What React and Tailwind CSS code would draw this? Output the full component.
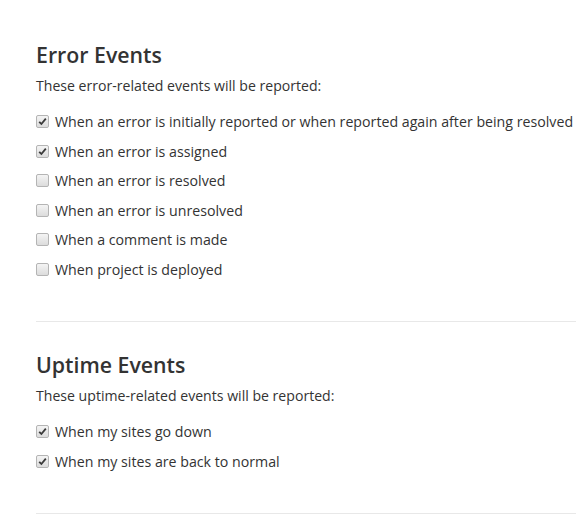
const errorEvents = [
  { label: "When an error is initially reported or when reported again after being resolved", on: true },
  { label: "When an error is assigned", on: true },
  { label: "When an error is resolved", on: false },
  { label: "When an error is unresolved", on: false },
  { label: "When a comment is made", on: false },
  { label: "When project is deployed", on: false },
];

const uptimeEvents = [
  { label: "When my sites go down", on: true },
  { label: "When my sites are back to normal", on: true },
];

function Box({ on }) {
  return (
    <span className="w-[13px] h-[13px] rounded-[2px] border border-[#b4b4b4] bg-gradient-to-b from-[#f4f4f4] to-[#dcdcdc] flex items-center justify-center shrink-0">
      {on && (
        <svg width="9" height="9" viewBox="0 0 9 9">
          <path d="M1.2 4.8 L3.4 7 L7.8 1.6" fill="none" stroke="#3a3a3a" strokeWidth="1.8" />
        </svg>
      )}
    </span>
  );
}

function Section({ title, sub, items }) {
  return (
    <div>
      <h2 className="text-[21.3px] font-semibold text-[#333] leading-[30px]">{title}</h2>
      <p className="text-[14.1px] text-[#333] mt-[6px] leading-[20px]">{sub}</p>
      <div className="mt-[11px] flex flex-col">
        {items.map((item, i) => (
          <label key={i} className="flex items-center gap-[6px] h-[29.5px]">
            <Box on={item.on} />
            <span className="text-[14.2px] text-[#333] whitespace-nowrap">{item.label}</span>
          </label>
        ))}
      </div>
    </div>
  );
}

export default function App() {
  return (
    <div className="bg-white w-[579px] h-[517px] overflow-hidden pl-[36px] pt-[40px]" style={{ fontFamily: "'Open Sans', sans-serif" }}>
      <Section title="Error Events" sub="These error-related events will be reported:" items={errorEvents} />
      <div className="mt-[37px] border-t border-[#e8e8e8] w-[540px]" />
      <div className="pt-[28px]">
        <Section title="Uptime Events" sub="These uptime-related events will be reported:" items={uptimeEvents} />
      </div>
      <div className="mt-[37px] border-t border-[#e8e8e8] w-[540px]" />
    </div>
  );
}
